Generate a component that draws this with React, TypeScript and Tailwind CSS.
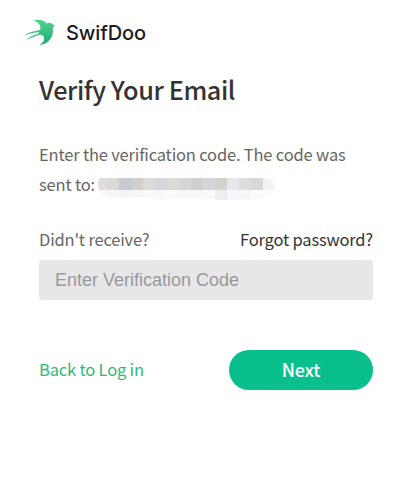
import React from "react"

const topRow = [
  "#e2dddd", "#d9d9d5", "#c8cad1", "#d1d0cf", "#dbdbd9", "#d4d6db", "#dadad8",
  "#d7d6d4", "#cfcfd0", "#d4d6da", "#d4d2cd", "#e6e8eb", "#dcdcdd", "#d9d8d4", "#f2f3f5",
]
const bottomRow = [
  "#f7f7f7", "#f6f6f6", "#f5f5f6", "#f6f6f6", "#f9f9f9", "#f8f8f8", "#fbfbfb",
  "#f8f8f8", "#f8f8f8", "#f9f9fa", "#ededec", "#f4f5f8", "#f7f7f8", "#fbfbfb", "#fcfcfc",
]

const Bird = () => (
  <svg width="34" height="30" viewBox="69 54 102 90" className="shrink-0">
    <defs>
      <linearGradient id="bird" x1="0.4" y1="0" x2="0.6" y2="1">
        <stop offset="0" stopColor="#4bd38b" />
        <stop offset="0.5" stopColor="#3cc383" />
        <stop offset="1" stopColor="#20a873" />
      </linearGradient>
    </defs>
    <path
      fill="url(#bird)"
      d="M100 61C115 57 132 59 142 71C146 67 153 67 157 73L165 76L158 83C161 99 156 113 146 123C139 130 130 134 119 134C128 129 134 122 132 114C131 107 125 103 115 105C104 109 92 114 78 120C85 113 97 107 112 102L119 97C102 97 88 101 72 107C82 99 98 93 120 90C125 78 116 66 100 61Z"
    />
  </svg>
)

const HiddenEmail = () => (
  <svg width="178" height="22" viewBox="97 178 178 22" className="ml-[3px] mt-[9px]">
    <clipPath id="smudge">
      <path d="M100 178H268C272 180 275 184 275 188C275 194 270 199 262 199L225 200L202 199C192 198 180 199 165 199C148 199 150 197 137 197C124 197 112 199 106 196C101 193 98 190 98 185C98 182 98 180 100 178Z" />
    </clipPath>
    <g clipPath="url(#smudge)" shapeRendering="crispEdges">
      {topRow.map((fill, i) => (
        <rect key={i} x={95 + i * 12} y="178" width="12" height="12" fill={fill} />
      ))}
      {bottomRow.map((fill, i) => (
        <rect key={i} x={95 + i * 12} y="190" width="12" height="10" fill={fill} />
      ))}
    </g>
  </svg>
)

export default function App() {
  return (
    <div className="h-[478px] w-[404px] bg-white font-['Noto_Sans_CJK_SC','Noto_Sans',sans-serif] text-[16.5px] tracking-[-0.18px] text-[#666]">
      <header className="flex h-12 items-start pl-[23px] pt-[18px]">
        <Bird />
        <span className="ml-[9px] font-[Inter,sans-serif] text-[20px] font-medium leading-[30px] tracking-[-0.1px] text-[#1c1c1e]">
          SwifDoo
        </span>
      </header>
      <main className="pl-[39px] pr-[31px]">
        <h1 className="pt-5 text-[25.3px] font-medium leading-[42px] tracking-[-0.42px] text-[#333]">
          Verify Your Email
        </h1>
        <div className="mt-[29px] leading-[30px]">
          <p className="whitespace-nowrap">Enter the verification code. The code was</p>
          <div className="flex h-[30px]">
            <span className="w-[55px] whitespace-nowrap">sent to:</span>
            <HiddenEmail />
          </div>
        </div>
        <div className="mt-[25px] flex justify-between leading-[30px]">
          <span>Didn't receive?</span>
          <a href="#" className="text-[#333]">Forgot password?</a>
        </div>
        <input
          type="text"
          placeholder="Enter Verification Code"
          className="mt-1.5 block h-10 w-full rounded bg-[#e7e7e9] px-4 font-['Liberation_Sans',sans-serif] text-lg tracking-normal outline-none placeholder:text-[#999]"
        />
        <div className="mt-[50px] flex items-center justify-between">
          <a href="#" className="pb-0.5 text-[#2fb77c]">Back to Log in</a>
          <button className="h-10 w-36 rounded-full bg-[#09bf8b] pb-0.5 text-[18px] font-medium text-white">
            Next
          </button>
        </div>
      </main>
    </div>
  )
}
